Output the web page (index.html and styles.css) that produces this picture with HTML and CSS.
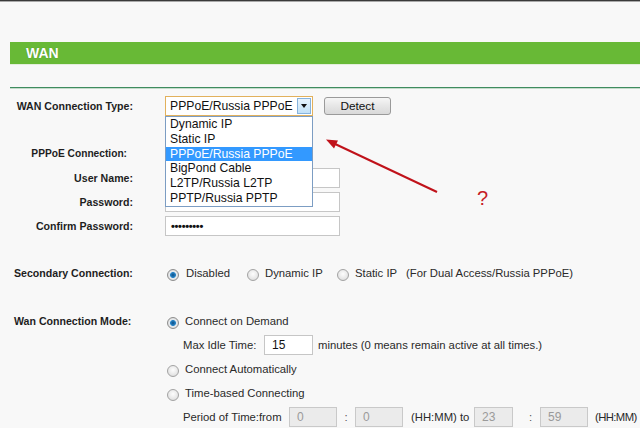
FILE: index.html
```html
<!DOCTYPE html>
<html>
<head>
<meta charset="utf-8">
<title>WAN</title>
<link rel="stylesheet" href="styles.css">
</head>
<body>
<div class="topline"></div>
<div class="titlebar">WAN</div>
<div class="rule"></div>
<form class="form">
  <div class="row r-type">
    <span class="lbl">WAN Connection Type:</span>
    <div class="ctl">
      <div class="select-wrap">
        <div class="select"><span class="sel-text">PPPoE/Russia PPPoE</span><span class="sel-arrow"><i></i></span></div>
        <ul class="dropdown">
          <li>Dynamic IP</li>
          <li>Static IP</li>
          <li class="hl">PPPoE/Russia PPPoE</li>
          <li>BigPond Cable</li>
          <li>L2TP/Russia L2TP</li>
          <li>PPTP/Russia PPTP</li>
        </ul>
      </div>
      <span class="btn">Detect</span>
    </div>
  </div>
  <div class="row r-pppoe">
    <span class="lbl lbl-pppoe">PPPoE Connection:</span>
  </div>
  <div class="row r-user">
    <span class="lbl">User Name:</span>
    <div class="ctl"><span class="inp wide"></span></div>
  </div>
  <div class="row">
    <span class="lbl">Password:</span>
    <div class="ctl"><span class="inp wide"></span></div>
  </div>
  <div class="row">
    <span class="lbl">Confirm Password:</span>
    <div class="ctl"><span class="inp wide dots">•••••••••</span></div>
  </div>

  <div class="row r-sec">
    <span class="lbl left">Secondary Connection:</span>
    <div class="ctl">
      <span class="opt o1"><span class="radio on"></span><span class="txt">Disabled</span></span>
      <span class="opt o2"><span class="radio"></span><span class="txt">Dynamic IP</span></span>
      <span class="opt o3"><span class="radio"></span><span class="txt">Static IP</span></span>
      <span class="txt">(For Dual Access/Russia PPPoE)</span>
    </div>
  </div>

  <div class="row r-mode">
    <span class="lbl left">Wan Connection Mode:</span>
    <div class="ctl">
      <span class="opt"><span class="radio on"></span><span class="txt">Connect on Demand</span></span>
    </div>
  </div>
  <div class="row">
    <span class="lbl"></span>
    <div class="ctl sub">
      <span class="txt idle-lbl">Max Idle Time:</span>
      <span class="inp idle">15</span>
      <span class="txt note">minutes (0 means remain active at all times.)</span>
    </div>
  </div>
  <div class="row">
    <span class="lbl"></span>
    <div class="ctl">
      <span class="opt"><span class="radio"></span><span class="txt">Connect Automatically</span></span>
    </div>
  </div>
  <div class="row">
    <span class="lbl"></span>
    <div class="ctl">
      <span class="opt"><span class="radio"></span><span class="txt">Time-based Connecting</span></span>
    </div>
  </div>
  <div class="row">
    <span class="lbl"></span>
    <div class="ctl sub">
      <span class="txt period-lbl">Period of Time:from</span>
      <span class="inp dis t1">0</span>
      <span class="txt colon">:</span>
      <span class="inp dis t2">0</span>
      <span class="txt hhmm">(HH:MM) to</span>
      <span class="inp dis t3">23</span>
      <span class="txt colon c2">:</span>
      <span class="inp dis t4">59</span>
      <span class="txt hhmm2">(HH:MM)</span>
    </div>
  </div>
</form>

<svg class="annot" width="640" height="428" viewBox="0 0 640 428">
  <line x1="437" y1="192" x2="333" y2="143" stroke="#c0121a" stroke-width="2"/>
  <polygon points="326,139.5 338,140.5 334,148.5" fill="#c0121a"/>
</svg>
<span class="qmark">?</span>
</body>
</html>
```

FILE: styles.css
```css
html, body {
  margin: 0;
  padding: 0;
}
body {
  width: 640px;
  height: 428px;
  overflow: hidden;
  position: relative;
  background: #f8f8f8;
  font-family: "Liberation Sans", Arial, sans-serif;
  color: #222;
}
.topline {
  height: 1px;
  background: #3a3a3a;
  border-bottom: 1px solid #a9a9a9;
}
.titlebar {
  margin: 40px 0 0 10px;
  height: 22px;
  line-height: 22px;
  padding-left: 16px;
  background: #68b936;
  color: #fff;
  font-weight: bold;
  font-size: 14px;
  text-shadow: 0 0 1px rgba(40, 90, 20, 0.5);
  border-bottom: 1px solid #e4eedc;
}
.rule {
  margin: 22px 0 0 10px;
  height: 1px;
  background: #3f8c5f;
  border-bottom: 1px solid #c4dbcb;
}
.form {
  margin: 0;
  padding: 5px 0 0 14px;
}
.row {
  display: flex;
  align-items: center;
  height: 24px;
}
.r-pppoe { margin-top: 23px; }
.r-user { margin-top: 1px; }
.r-sec { margin-top: 23px; }
.r-mode { margin-top: 24px; }

.lbl {
  flex: none;
  width: 119px;
  margin-right: 32px;
  text-align: right;
  font-weight: bold;
  font-size: 10.6px;
  color: #1e1e1e;
}
.lbl.left { text-align: left; }
.lbl-pppoe { width: 113px; margin-right: 38px; font-size: 10.2px; }

.ctl {
  display: flex;
  align-items: center;
  height: 24px;
}
.txt {
  font-size: 11.3px;
  color: #2a2a2a;
  white-space: nowrap;
}

/* select */
.select-wrap {
  position: relative;
  width: 148px;
  height: 20px;
}
.select {
  box-sizing: border-box;
  height: 20px;
  border: 1px solid #e2b15c;
  background: #fff;
  position: relative;
}
.sel-text {
  display: block;
  padding-left: 4px;
  font-size: 12.2px;
  line-height: 18px;
  color: #111;
}
.sel-arrow {
  position: absolute;
  top: 1px;
  right: 1px;
  bottom: 1px;
  width: 14px;
  box-sizing: border-box;
  border: 1px solid #86b3dd;
  background: linear-gradient(#e8f4fd, #c2e1f7);
  display: flex;
  align-items: center;
  justify-content: center;
}
.sel-arrow i {
  width: 0;
  height: 0;
  border-left: 3.5px solid transparent;
  border-right: 3.5px solid transparent;
  border-top: 4px solid #111;
}
.dropdown {
  position: absolute;
  top: 20px;
  left: 0;
  width: 148px;
  box-sizing: border-box;
  margin: 0;
  padding: 0;
  list-style: none;
  border: 1px solid #7c9dc3;
  background: #fff;
  z-index: 5;
}
.dropdown li {
  height: 14.8px;
  line-height: 14.8px;
  padding-left: 4px;
  font-size: 12.2px;
  color: #111;
  white-space: nowrap;
}
.dropdown li.hl {
  background: #3399ff;
  color: #fff;
}

.btn {
  box-sizing: border-box;
  margin-left: 11px;
  width: 67px;
  height: 18px;
  border: 1px solid #9a9a9a;
  border-radius: 3px;
  background: linear-gradient(#f6f6f6, #e6e6e6 50%, #d9d9d9);
  font-size: 11.8px;
  line-height: 16px;
  text-align: center;
  color: #111;
}

/* inputs */
.inp {
  box-sizing: border-box;
  display: block;
  height: 20px;
  border: 1px solid #c6c6c6;
  background: #fff;
  font-size: 12px;
  line-height: 18px;
  padding-left: 7px;
  color: #111;
}
.inp.wide { width: 175px; }
.inp.dots { font-size: 11px; font-weight: bold; letter-spacing: -0.3px; padding-left: 5px; }

/* radios */
.opt {
  display: flex;
  align-items: center;
  flex: none;
}
.radio {
  flex: none;
  box-sizing: border-box;
  width: 12px;
  height: 12px;
  margin: 4px 6px 0 2px;
  border-radius: 50%;
  border: 1px solid #a3a3a3;
  background: radial-gradient(circle at 50% 40%, #fdfdfd 0, #e9e9e9 55%, #d2d2d2 100%);
}
.radio.on {
  border-color: #8e8e8e;
  background: radial-gradient(circle at 50% 50%, #0d4f86 0, #2a86c8 2.6px, #dfe9f1 3.3px, #e9e9e9 4px, #cfcfcf 6px);
}
.o1 .radio { margin-right: 7px; }
.o1 { width: 80px; }
.o2 { width: 90px; }
.o3 { width: 71px; }

.sub { padding-left: 18px; }
.idle-lbl { width: 81px; }
.inp.idle { width: 49px; }
.note { margin-left: 5px; }

.period-lbl { width: 106px; }
.inp.dis {
  background: #ebebeb;
  border-color: #c9c9c9;
  color: #9a9a9a;
  width: 48px;
}
.inp.t3 { width: 39px; }
.colon { width: 18px; text-align: center; color: #555; }
.c2 { width: 27px; text-align: left; padding-left: 16px; box-sizing: border-box; }
.hhmm { margin-left: 8px; width: 63px; }
.hhmm2 { margin-left: 7px; letter-spacing: -0.6px; }

/* annotations overlay */
.annot {
  position: absolute;
  left: 0;
  top: 0;
  pointer-events: none;
  z-index: 10;
}
.qmark {
  position: absolute;
  left: 477px;
  top: 188px;
  font-size: 20px;
  line-height: 20px;
  color: #c61d27;
  z-index: 10;
}
```
